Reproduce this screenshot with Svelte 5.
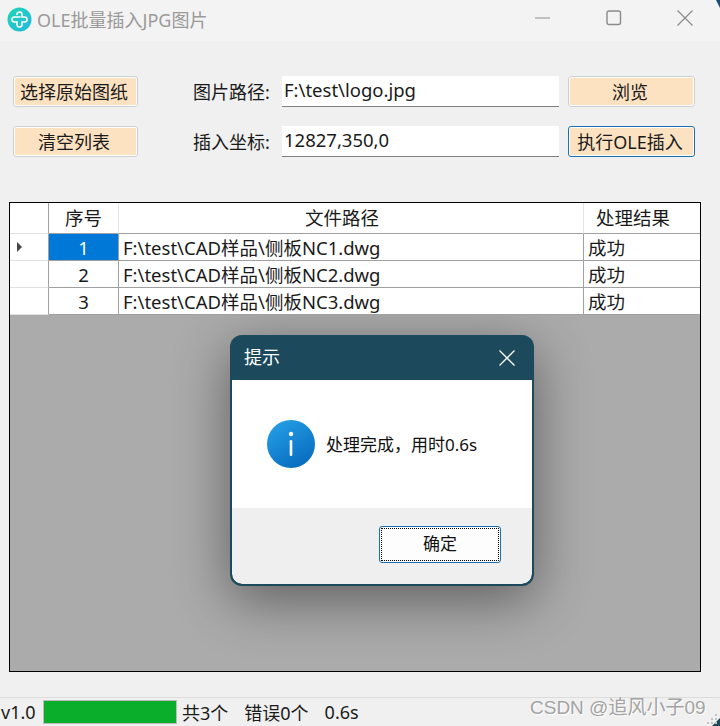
<script>
    const rows = [
        { id: 1, path: 'F:\\test\\CAD样品\\侧板NC1.dwg', result: '成功' },
        { id: 2, path: 'F:\\test\\CAD样品\\侧板NC2.dwg', result: '成功' },
        { id: 3, path: 'F:\\test\\CAD样品\\侧板NC3.dwg', result: '成功' }
    ];
    const gripDots = [[17, 4], [13, 8], [17, 8], [9, 12], [13, 12], [17, 12]];
</script>

<div class="window">
    <header class="titlebar">
        <svg class="logo" width="25" height="25" viewBox="0 0 25 25">
            <defs>
                <linearGradient id="logoFill" x1="0" y1="0" x2="1" y2="1">
                    <stop offset="0" stop-color="#1fd6b4" />
                    <stop offset="1" stop-color="#22b8e0" />
                </linearGradient>
            </defs>
            <circle cx="12.5" cy="12.5" r="12" fill="url(#logoFill)" />
            <path d="M10 7.5a2.5 2.5 0 0 1 5 0V10h2.5a2.5 2.5 0 0 1 0 5H15v2.5a2.5 2.5 0 0 1-5 0V15H7.5a2.5 2.5 0 0 1 0-5H13" fill="none" stroke="#fff" stroke-width="1.6" stroke-linecap="round" />
        </svg>
        <span class="app-title">OLE批量插入JPG图片</span>
        <div class="win-controls">
            <svg width="16" height="16" viewBox="0 0 16 16"><path d="M0 8h15" stroke="#8f8f8f" stroke-width="1" /></svg>
            <svg width="16" height="16" viewBox="0 0 16 16"><rect x="1" y="1" width="13.5" height="13.5" rx="2" fill="none" stroke="#8a8a8a" stroke-width="1.4" /></svg>
            <svg width="16" height="16" viewBox="0 0 16 16"><path d="M0.5 0.5l15 15M15.5 0.5l-15 15" stroke="#8a8a8a" stroke-width="1.2" /></svg>
        </div>
    </header>

    <section class="form">
        <button class="btn">选择原始图纸</button>
        <span class="label">图片路径:</span>
        <div class="input">F:\test\logo.jpg</div>
        <button class="btn">浏览</button>
        <button class="btn">清空列表</button>
        <span class="label">插入坐标:</span>
        <div class="input">12827,350,0</div>
        <button class="btn active">执行OLE插入</button>
    </section>

    <section class="grid">
        <div class="grid-row head">
            <div class="cell marker"></div>
            <div class="cell center">序号</div>
            <div class="cell center sortable">文件路径</div>
            <div class="cell center sortable">处理结果</div>
        </div>
        {#each rows as row, i (row.id)}
            <div class="grid-row">
                <div class="cell marker">
                    {#if i === 0}<span class="arrow"></span>{/if}
                </div>
                <div class="cell center" class:selected={i === 0}>{row.id}</div>
                <div class="cell">{row.path}</div>
                <div class="cell">{row.result}</div>
            </div>
        {/each}

        <div class="empty">
            <div class="dialog">
                <div class="dialog-head">
                    <span>提示</span>
                    <svg width="16" height="16" viewBox="0 0 16 16"><path d="M0.5 0.5l15 15M15.5 0.5l-15 15" stroke="#fff" stroke-width="1.3" /></svg>
                </div>
                <div class="dialog-body">
                    <svg width="48" height="48" viewBox="0 0 48 48">
                        <defs>
                            <linearGradient id="infoFill" x1="0.2" y1="0" x2="0.8" y2="1">
                                <stop offset="0" stop-color="#259fe6" />
                                <stop offset="1" stop-color="#0669bd" />
                            </linearGradient>
                        </defs>
                        <circle cx="24" cy="24" r="24" fill="url(#infoFill)" />
                        <circle cx="24" cy="14" r="2.2" fill="#fff" />
                        <rect x="22.7" y="20" width="2.6" height="16" rx="1.3" fill="#fff" />
                    </svg>
                    <span class="message">处理完成，用时0.6s</span>
                </div>
                <div class="dialog-foot">
                    <button class="ok"><span>确定</span></button>
                </div>
            </div>
        </div>
    </section>

    <footer class="status">
        <span class="version">v1.0</span>
        <div class="progress"></div>
        <span class="total">共3个</span>
        <span class="errors">错误0个</span>
        <span>0.6s</span>
        <span class="watermark">CSDN @追风小子09</span>
        <svg class="grip" width="22" height="16" viewBox="0 0 22 16">
            <path d="M22 8L14 16H22Z" fill="#1c4a5c" />
            {#each gripDots as [x, y]}
                <rect {x} {y} width="2" height="2" fill="#c4c4c4" />
            {/each}
        </svg>
    </footer>
    <span class="corner"></span>
</div>

<style>
    :global(body) { margin: 0; background: #f0f0f0; }
    .window {
        width: 720px; height: 726px; display: flex; flex-direction: column; position: relative; overflow: hidden;
        background: #f0f0f0; color: #1a1a1a;
        font-family: "Noto Sans", "Noto Sans CJK SC", sans-serif; font-size: 18.5px;
    }
    .corner { position: absolute; right: 0; top: 0; width: 0; height: 0; border-top: 8px solid #1c4a7c; border-left: 4px solid transparent; }

    .titlebar { height: 41px; flex: none; display: flex; align-items: center; padding-left: 7px; background: #f3f3f3; }
    .logo { margin-right: 5px; margin-top: -2px; }
    .app-title { font-size: 18px; color: #9a9a9a; margin-top: -4px; }
    .win-controls { margin-left: auto; display: flex; gap: 55px; padding-right: 27px; margin-top: -5px; }

    .form {
        display: grid; grid-template-columns: 125px 144px 286px 127px; grid-template-rows: 31px 31px;
        row-gap: 19px; align-items: center; padding: 35px 0 0 13px; height: 161px; box-sizing: border-box; flex: none;
    }
    .btn {
        height: 31px; box-sizing: border-box; padding: 0 3px 3px 0; font: inherit; font-size: 18px; color: inherit; background: #fde2c2;
        border: 2px solid #fff; outline: 1px solid #cfcfcf; outline-offset: -1px; border-radius: 3px;
    }
    .btn.active { outline-color: #1a6fb0; }
    .label { padding-left: 55px; white-space: nowrap; font-size: 18px; margin-top: -2px; }
    .input {
        width: 277px; height: 31px; box-sizing: border-box; background: #fff; border-bottom: 1px solid #808080;
        padding-left: 2px; line-height: 27px; white-space: nowrap;
    }

    .grid {
        margin: 0 19px 0 9px; height: 470px; flex: none; box-sizing: border-box; border: 1px solid #000;
        background: #fff; display: flex; flex-direction: column;
    }
    .grid-row { display: grid; grid-template-columns: 39px 70px 465px 116px; height: 27px; flex: none; }
    .grid-row.head { height: 31px; }
    .cell {
        box-sizing: border-box; border-right: 1px solid #a0a0a0; border-bottom: 1px solid #a0a0a0; background: #fff;
        padding-left: 4px; line-height: 28px; white-space: nowrap; overflow: hidden;
    }
    .head .cell { line-height: 30px; border-right-color: #e4e4e4; }
    .head .cell:first-child { border-right-color: #a0a0a0; }
    .cell:last-child { border-right: none; }
    .center { text-align: center; padding-left: 0; }
    .sortable { padding-right: 18px; }
    .marker { display: flex; align-items: center; padding-left: 7px; border-bottom-color: #e0e0e0; }
    .arrow { width: 0; height: 0; border-left: 5px solid #444; border-top: 5px solid transparent; border-bottom: 5px solid transparent; }
    .selected { background: #0078d7; color: #fff; }

    .empty { flex: 1; position: relative; overflow: hidden; background: #ababab; }
    .dialog {
        position: absolute; left: 220px; top: 20px; width: 304px; height: 251px; box-sizing: border-box;
        display: flex; flex-direction: column; background: #1c4a5c; border: 2px solid #1c4a5c; border-top: none; border-radius: 12px;
        box-shadow: 0 14px 55px rgba(0, 0, 0, 0.45); overflow: hidden;
    }
    .dialog-head { height: 45px; flex: none; display: flex; align-items: center; justify-content: space-between; color: #fff; padding: 0 17px 0 12px; font-size: 18px; }
    .dialog-head span { margin-top: -3px; }
    .dialog-body { height: 128px; flex: none; background: #fff; display: flex; align-items: center; padding-left: 35px; gap: 11px; }
    .message { font-size: 17px; color: #111; margin-top: -2px; }
    .dialog-foot { flex: 1; background: #efefef; display: flex; justify-content: flex-end; padding: 18px 31px 0 0; border-radius: 0 0 10px 10px; }
    .ok {
        width: 122px; height: 37px; padding: 1px; box-sizing: border-box; background: #fdfdfd; border: 1px solid #1a6fb0; border-radius: 3px;
        font: inherit; font-size: 17px; color: #111;
    }
    .ok span { display: block; height: 100%; line-height: 30px; box-sizing: border-box; border: 1px dotted #000; }

    .status {
        flex: 1; margin-top: 25px; border-top: 1px solid #dcdcdc; display: flex; align-items: center; white-space: nowrap; position: relative; padding: 0 0 1px 1px; font-size: 18px;
    }
    .version { width: 42px; flex: none; }
    .progress { width: 134px; height: 24px; box-sizing: border-box; flex: none; background: #0aae2b; border: 1px solid #bcbcbc; }
    .total { margin-left: 5px; }
    .errors { margin: 0 16px; }
    .watermark {
        position: absolute; left: 530px; top: -6px; font-size: 19px; color: #a3a3a3; text-shadow: 1px 1px 0 #fff;
        font-family: "Liberation Sans", "Noto Sans CJK SC", sans-serif;
    }
    .grip { position: absolute; right: 0; bottom: 0; }
</style>
